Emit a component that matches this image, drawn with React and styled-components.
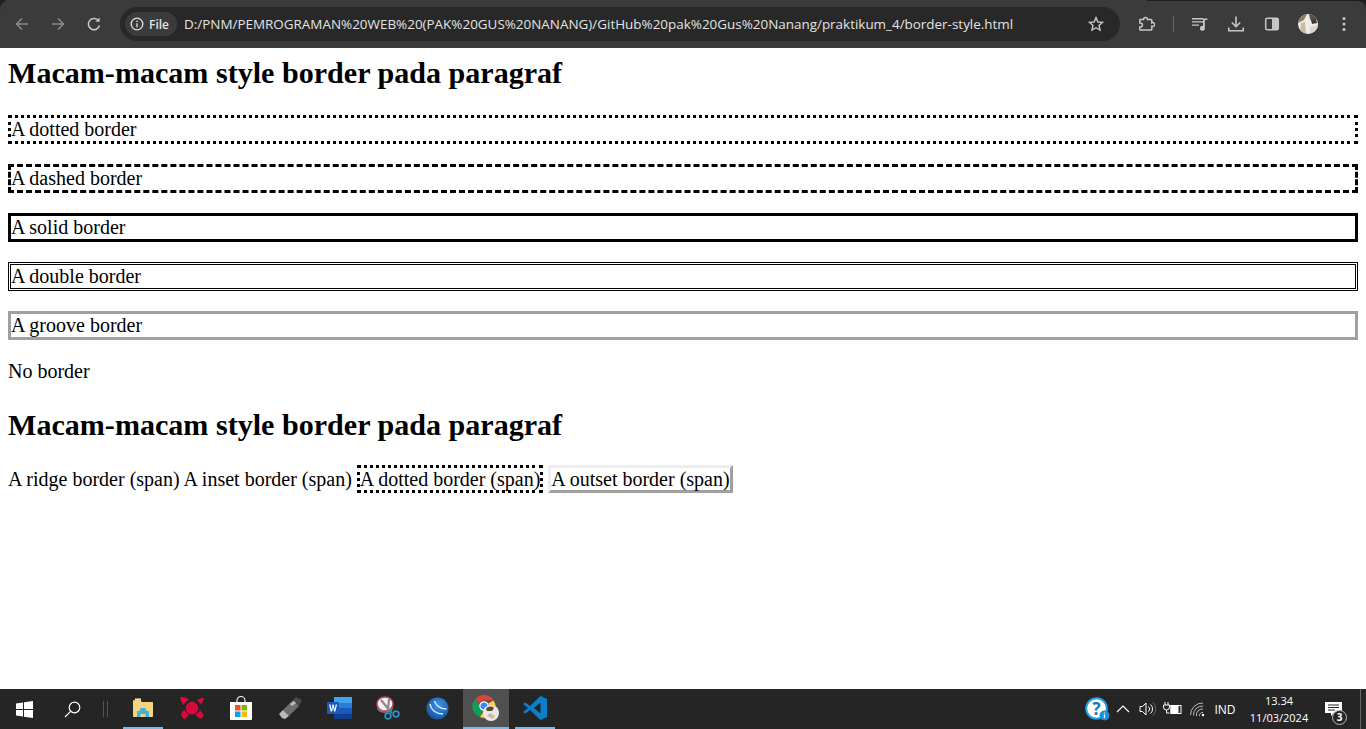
import React from 'react'
import styled, { createGlobalStyle } from 'styled-components'

const GlobalStyle = createGlobalStyle`
    html, body {
        margin: 0;
        padding: 0;
        background: #fff;
    }
`
const Window = styled.div`
    display: flex;
    flex-direction: column;
    height: 729px;
    overflow: hidden;
`
const BrowserBar = styled.header`
    background: #1f1f1f;
`
const TopStrip = styled.div`
    height: 1px;
    background: linear-gradient(to right, #1f1f1f 0, #1f1f1f 5px, #3b3b3b 5px, #3b3b3b 1147px, #1f1f1f 1147px);
`
const Toolbar = styled.div`
    display: flex;
    align-items: center;
    height: 47px;
    background: #3b3b3b;
    padding: 0 0 1px 0;
    box-sizing: border-box;
    border-radius: 8px 8px 0 0;
`
const NavButton = styled.div`
    width: 36px;
    height: 36px;
    display: flex;
    align-items: center;
    justify-content: center;
    color: ${(p) => (p.$off ? '#8a8a8a' : '#c7c7c7')};
`
const NavGroup = styled.div`
    display: flex;
    align-items: center;
    padding-left: 4px;
`
const Omnibox = styled.div`
    display: flex;
    align-items: center;
    width: 1000px;
    height: 34px;
    margin-left: 8px;
    background: #282828;
    border-radius: 17px;
    box-sizing: border-box;
    padding: 0 13px 0 5px;
`
const Chip = styled.div`
    display: flex;
    align-items: center;
    gap: 5px;
    height: 24px;
    padding: 0 8px 0 5px;
    border-radius: 12px;
    background: #3b3b3b;
    color: #e3e3e3;
    font: 600 12px "Open Sans", sans-serif;
`
const Url = styled.div`
    flex: 1;
    margin-left: 7px;
    color: #e3e3e3;
    font: 400 13.45px "Open Sans", sans-serif;
    white-space: nowrap;
    overflow: hidden;
`
const ToolIcons = styled.div`
    display: flex;
    align-items: center;
    margin-left: 8px;
    flex: 1;
`
const ToolIcon = styled.div`
    width: ${(p) => p.$w || 36}px;
    height: 32px;
    display: flex;
    align-items: center;
    justify-content: center;
    color: #c7c7c7;
`
const ToolDivider = styled.div`
    width: 1px;
    height: 16px;
    background: #666;
    margin: 0 8px 0 9px;
`
const Page = styled.main`
    flex: 1;
    padding: 8px;
    background: #fff;
    color: #000;
    font: 20px "Liberation Serif", serif;
    line-height: 23px;
`
const Title = styled.h1`
    font-size: 30.08px;
    line-height: 34px;
    font-weight: 700;
    margin: ${(p) => (p.$first ? '0 0 25px' : '25px 0 26px')};
`
const Para = styled.p`
    margin: 0 0 20px;
    border: ${(p) => p.$border || 'none'};
`
const Line = styled.p`
    margin: 0;
`
const Boxed = styled.span`
    ${(p) => p.$kind === 'dotted' && 'border: 3px dotted #000;'}
    ${(p) => p.$kind === 'outset' && `
        border: 3px solid;
        border-color: #eee #a0a0a0 #a0a0a0 #eee;
    `}
`
const Taskbar = styled.footer`
    display: flex;
    align-items: stretch;
    height: 40px;
    background: #252525;
    color: #fff;
    font: 400 11px "Open Sans", sans-serif;
`
const StartButton = styled.div`
    width: 48px;
    display: flex;
    align-items: center;
    justify-content: center;
`
const SearchButton = styled.div`
    width: 48px;
    display: flex;
    align-items: center;
    justify-content: center;
`
const Grip = styled.div`
    width: 3px;
    height: 16px;
    margin: 12px 15px 0 7px;
    border-left: 1px solid #555;
    border-right: 1px solid #555;
`
const AppSlot = styled.div`
    width: 40px;
    margin-right: 9px;
    display: flex;
    align-items: center;
    justify-content: center;
    box-sizing: border-box;
    border-bottom: 2px solid ${(p) => (p.$open ? '#76b9ed' : 'transparent')};
    ${(p) => p.$active && 'width: 46px; margin: 0 6px 0 -3px; background: #505050;'}
`
const Tray = styled.div`
    margin-left: auto;
    display: flex;
    align-items: center;
`
const TrayIcon = styled.div`
    width: ${(p) => p.$w || 25}px;
    display: flex;
    align-items: center;
    justify-content: center;
`
const Lang = styled.div`
    width: 30px;
    text-align: center;
    font-size: 12px;
`
const Clock = styled.div`
    width: 78px;
    text-align: center;
    line-height: 17px;
`
const Notify = styled.div`
    position: relative;
    align-self: stretch;
    width: 30px;
    display: flex;
    align-items: center;
    justify-content: center;
`
const NotifyBadge = styled.span`
    position: absolute;
    left: 14px;
    top: 21px;
    width: 13px;
    height: 13px;
    border-radius: 50%;
    border: 1px solid #bbb;
    background: #252525;
    font-size: 10px;
    font-weight: 700;
    line-height: 13px;
    text-align: center;
`
const ShowDesktop = styled.div`
    width: 5px;
    border-left: 1px solid #666;
    margin-left: 12px;
    align-self: stretch;
`

const Arrow = ({ flip }) => (
    <svg width="16" height="16" viewBox="0 0 16 16" fill="none" stroke="currentColor" strokeWidth="1.5" transform={flip ? 'scale(-1 1)' : undefined}>
        <path d="M14 8H2.500M8 2.500 2.500 8 8 13.500" />
    </svg>
)
const Reload = () => (
    <svg width="16" height="16" viewBox="0 0 16 16" fill="none" stroke="currentColor" strokeWidth="1.6">
        <path d="M13.400 9.500A5.600 5.600 0 1 1 12 4.200" />
        <path d="M13.600 1.600v4.200H9.400Z" fill="currentColor" stroke="none" />
    </svg>
)
const Info = () => (
    <svg width="14" height="14" viewBox="0 0 14 14" fill="none" stroke="currentColor" strokeWidth="1.3">
        <circle cx="7" cy="7" r="5.800" />
        <path d="M7 6.200v4M7 3.600v1.400" />
    </svg>
)
const Star = () => (
    <svg width="16" height="16" viewBox="0 0 16 16" fill="none" stroke="currentColor" strokeWidth="1.4">
        <path d="M8 1.600 9.900 6l4.700.4-3.600 3.100 1.100 4.600L8 11.700l-4.100 2.400L5 9.500 1.400 6.400 6.100 6Z" />
    </svg>
)
const Puzzle = () => (
    <svg width="18" height="18" viewBox="0 0 18 18" fill="none" stroke="currentColor" strokeWidth="1.5">
        <path d="M3 4.500h3.500a2 2 0 1 1 4 0H14a.8.8 0 0 1 .8.8v2.400a2 2 0 1 1 0 3.600v3a.8.8 0 0 1-.8.8H3.600a.8.8 0 0 1-.8-.8v-2.400h.7a1.900 1.900 0 1 0 0-3.800h-.7V5.300Z" />
    </svg>
)
const MediaQueue = () => (
    <svg width="18" height="18" viewBox="0 0 18 18" fill="currentColor">
        <path d="M1 3h11v1.400H1zM1 6.200h11v1.400H1zM1 9.400h7v1.400H1z" />
        <path d="M12 3.400h4.400v1.600H13.800v8.200a2.400 2.400 0 1 1-1.800-2.200Z" />
    </svg>
)
const Download = () => (
    <svg width="18" height="18" viewBox="0 0 18 18" fill="none" stroke="currentColor" strokeWidth="1.6">
        <path d="M9 1.500v10M4.800 7.500 9 11.700l4.200-4.200M1.800 12.500v3.300h14.400v-3.300" />
    </svg>
)
const SidePanel = () => (
    <svg width="16" height="16" viewBox="0 0 16 16">
        <rect x="1.700" y="2.200" width="12.600" height="11.600" rx="1.500" fill="none" stroke="currentColor" strokeWidth="1.5" />
        <rect x="8" y="2.200" width="6.300" height="11.600" fill="currentColor" />
    </svg>
)
const Dots = () => (
    <svg width="16" height="16" viewBox="0 0 16 16" fill="currentColor">
        <circle cx="8" cy="2.500" r="1.500" />
        <circle cx="8" cy="8" r="1.500" />
        <circle cx="8" cy="13.500" r="1.500" />
    </svg>
)
const AvatarIcon = () => (
    <svg width="20" height="20" viewBox="0 0 20 20">
        <defs>
            <clipPath id="avatar-clip"><circle cx="10" cy="10" r="10" /></clipPath>
        </defs>
        <g clipPath="url(#avatar-clip)">
            <rect width="20" height="20" fill="#efece6" />
            <path d="M0 0h9L6 6 0 9Z" fill="#8c7b66" />
            <path d="M11 0h9v5l-6 3-2-3Z" fill="#5c5044" />
            <path d="M3 9l4-1 1 12H2Z" fill="#cdbb9f" />
            <path d="M13 6l5-1 1 4-5 1Z" fill="#3d3a36" />
            <path d="M12 13l8-2v9h-8Z" fill="#d9d6d0" />
        </g>
    </svg>
)
const WindowsLogo = () => (
    <svg width="17" height="17" viewBox="0 0 17 17" fill="#fff">
        <path d="M0 2.400 7 1.400v6.600H0zM8 1.300 17 0v8H8zM0 9h7v6.600l-7-1zM8 9h9v8l-9-1.300z" />
    </svg>
)
const Search = () => (
    <svg width="17" height="17" viewBox="0 0 17 17" fill="none" stroke="#fff" strokeWidth="1.2">
        <circle cx="10.500" cy="6.500" r="5.300" />
        <path d="M6.600 10.400 1 16" />
    </svg>
)
const Explorer = () => (
    <svg width="22" height="20" viewBox="0 0 22 20">
        <path d="M1 3a1 1 0 0 1 1-1h6l2 2h10.500a.5.5 0 0 1 .5.5V18a1 1 0 0 1-1 1H2a1 1 0 0 1-1-1Z" fill="#f5d67b" />
        <path d="M1 3a1 1 0 0 1 1-1h6l1 1H1Z" fill="#e0a93a" />
        <path d="M3 .5h6v2H3z" fill="#f9eeb5" />
        <path d="M5 19v-6h2.500l1-3h5l1 3H17v6h-3.500v-3h-5v3Z" fill="#3fb3e2" />
    </svg>
)
const RedApp = () => (
    <svg width="26" height="24" viewBox="0 0 26 24" fill="#d8093c">
        <circle cx="13" cy="12" r="6.500" />
        <path d="M1 1c4-.5 7 .5 9 3-2.500 1-4.500 3-5.500 5C3 7 1.500 4 1 1ZM25 2c-2 0-4.500.5-7 2.500 1.500 1 2.800 2.500 3.500 4C23.500 7 24.600 4.500 25 2ZM2 18.500c1-2.200 2-3.600 3.500-4.800 1 2 2.500 3.500 4.500 4.500-1 2-2.500 4-5 5.300-1-1.800-2.300-3.500-3-5ZM24.500 19c-1-2-2-3.500-3.500-5-1 2-2.500 3.500-4.500 4.500 1.500 2 3.500 3.500 6 4.500.8-1.500 1.500-2.800 2-4Z" />
        <path d="M6 12.500a7 7 0 0 1 6-7M20 11.500a7 7 0 0 0-5-5.500" fill="none" stroke="#252525" strokeWidth="0.8" />
    </svg>
)
const StoreBag = () => (
    <svg width="24" height="24" viewBox="0 0 24 24">
        <path d="M8 7V4.500a4 4 0 0 1 8 0V7" fill="none" stroke="#eee" strokeWidth="1.2" />
        <path d="M1 6h22v17a1 1 0 0 1-1 1H2a1 1 0 0 1-1-1Z" fill="#fff" />
        <path d="M6 9h5.500v5.500H6z" fill="#f25022" />
        <path d="M12.500 9H18v5.500h-5.500z" fill="#7fba00" />
        <path d="M6 15.500h5.500V21H6z" fill="#00a4ef" />
        <path d="M12.500 15.500H18V21h-5.500z" fill="#ffb900" />
    </svg>
)
const UsbStick = () => (
    <svg width="24" height="22" viewBox="0 0 24 22">
        <path d="M5 13 15 3l6 6-10 10Z" fill="#6e6e6e" />
        <path d="M15 3l3-3 6 3-3 6Z" fill="#4a4a4a" />
        <path d="M12 7l4-3 2 2-4 3Z" fill="#bdbdbd" />
        <path d="M1 17l4-4 6 6-4 3-3-1Z" fill="#b8b8b8" />
    </svg>
)
const Word = () => (
    <svg width="25" height="22" viewBox="0 0 25 22">
        <path d="M7 0h17a1 1 0 0 1 1 1v20a1 1 0 0 1-1 1H7Z" fill="#2b7cd3" />
        <path d="M7 0h18v6H7z" fill="#41a5ee" />
        <path d="M7 11h18v5.500H7z" fill="#185abd" />
        <path d="M7 16.500h18V22H7z" fill="#103f91" />
        <rect x="0" y="5" width="12" height="12" rx="1" fill="#185abd" />
        <path d="M2 7.500h1.500l1 5 1-5h1.200l1 5 1-5H10l-1.700 7H7l-1-4.500-1 4.500H3.700Z" fill="#fff" />
    </svg>
)
const Scissors = () => (
    <svg width="24" height="25" viewBox="0 0 24 25">
        <ellipse cx="9" cy="12" rx="8" ry="5" fill="#7a7a7a" />
        <ellipse cx="9" cy="8" rx="8" ry="7" fill="#f3f3f3" stroke="#c9475a" strokeWidth="1.5" />
        <path d="M5 4l9 11M13 3l-1 11" stroke="#8a8a8a" strokeWidth="2.2" fill="none" />
        <path d="M13 14l3 3" stroke="#2d8fc5" strokeWidth="1.8" />
        <circle cx="12" cy="20" r="2.800" fill="none" stroke="#2d8fc5" strokeWidth="1.8" />
        <circle cx="20" cy="18" r="2.800" fill="none" stroke="#2d8fc5" strokeWidth="1.8" />
    </svg>
)
const BlueGlobe = () => (
    <svg width="23" height="23" viewBox="0 0 23 23">
        <defs>
            <radialGradient id="globe-fill" cx="55%" cy="35%" r="70%">
                <stop offset="0" stopColor="#3d97e6" />
                <stop offset="1" stopColor="#134f9e" />
            </radialGradient>
        </defs>
        <circle cx="11.500" cy="11.500" r="11" fill="url(#globe-fill)" />
        <path d="M4 7c1 6 6 10 13 10M8.500 4c1 4 5 8 12 8" fill="none" stroke="#e2f0fb" strokeWidth="1.3" />
    </svg>
)
const ChromeIcon = () => (
    <svg width="28" height="28" viewBox="0 0 28 28">
        <path d="M12 1a11 11 0 0 1 9.500 5.500H12a5 5 0 0 0-4.700 3.300L3.500 4.800A11 11 0 0 1 12 1Z" fill="#db4437" />
        <path d="M3.500 4.800 7.300 11a5 5 0 0 0 4 5.900L8 23A11 11 0 0 1 3.500 4.800Z" fill="#0f9d58" />
        <path d="M21.500 6.500A11 11 0 0 1 8 23l4-6a5 5 0 0 0 4.300-7.800Z" fill="#ffcd40" />
        <circle cx="12" cy="12" r="4.200" fill="#4285f4" stroke="#fff" strokeWidth="1.2" />
        <circle cx="19" cy="19" r="8" fill="#ece8e0" />
        <path d="M14 15c2-3 6-3 8-1l-2 3h-5Z" fill="#5a4b3c" />
        <path d="M15 22l3-3 5 3-2 3Z" fill="#c7bba8" />
    </svg>
)
const VsCode = () => (
    <svg width="24" height="24" viewBox="0 0 24 24">
        <path d="M17.500 0 24 3v18l-6.500 3L7 14l-4.500 3.500L0 16l5-4-5-4 2.500-1.500L7 10Zm0 6.500L11 12l6.500 5.500Z" fill="#0a7fcc" />
    </svg>
)
const HelpIcon = () => (
    <svg width="25" height="24" viewBox="0 0 25 24">
        <circle cx="11.500" cy="11.500" r="10.300" fill="#fff" stroke="#22a0e8" strokeWidth="2" />
        <text x="11.500" y="17.500" textAnchor="middle" fontSize="17" fontWeight="700" fontFamily="Open Sans" fill="#1672c0">?</text>
        <circle cx="19.500" cy="18.500" r="5" fill="#1d8fd8" />
        <path d="M19.500 15.500v1M19.500 17.500v3.500" stroke="#fff" strokeWidth="1.3" />
    </svg>
)
const Chevron = () => (
    <svg width="14" height="14" viewBox="0 0 14 14" fill="none" stroke="#fff" strokeWidth="1.1">
        <path d="M1 10 7 4l6 6" />
    </svg>
)
const Speaker = () => (
    <svg width="17" height="16" viewBox="0 0 17 16" fill="none" stroke="#fff" strokeWidth="1">
        <path d="M1 5.500h2.500L7 2v12L3.500 10.500H1Z" />
        <path d="M9.500 5.500a3.500 3.500 0 0 1 0 5M11.500 3.500a6 6 0 0 1 0 9" />
        <path d="M14 1.500a9 9 0 0 1 0 13" stroke="#666" />
    </svg>
)
const Battery = () => (
    <svg width="19" height="14" viewBox="0 0 19 14" fill="none" stroke="#fff" strokeWidth="1">
        <path d="M2 0v3M5 0v3M.5 3h6v2a3 3 0 0 1-6 0ZM3.500 8v3h3" />
        <rect x="8" y="3.500" width="10" height="8" />
        <rect x="8" y="3.500" width="7" height="8" fill="#fff" />
    </svg>
)
const Wifi = () => (
    <svg width="15" height="15" viewBox="0 0 15 15" fill="none" stroke="#bbb" strokeWidth="1">
        <path d="M.5 13A12 12 0 0 1 13 1M3.500 13.500A9 9 0 0 1 13 4M6.500 14A6 6 0 0 1 13 7M9.500 14A3 3 0 0 1 13 10.500" />
        <circle cx="13" cy="13" r="1.200" fill="#fff" stroke="none" />
    </svg>
)
const Bubble = () => (
    <svg width="17" height="15" viewBox="0 0 17 15">
        <path d="M0 0h17v11H9l-3 3v-3H0Z" fill="#fff" />
        <path d="M3 3h11M3 5.500h11M3 8h7" stroke="#252525" strokeWidth="1" />
    </svg>
)

const paragrafs = [
    { text: 'A dotted border', border: '3px dotted #000' },
    { text: 'A dashed border', border: '3px dashed #000' },
    { text: 'A solid border', border: '3px solid #000' },
    { text: 'A double border', border: '3px double #000' },
    { text: 'A groove border', border: '3px solid #a0a0a0' },
    { text: 'No border' },
]

const apps = [
    { key: 'explorer', icon: <Explorer />, open: true },
    { key: 'red', icon: <RedApp /> },
    { key: 'store', icon: <StoreBag /> },
    { key: 'usb', icon: <UsbStick /> },
    { key: 'word', icon: <Word /> },
    { key: 'snip', icon: <Scissors /> },
    { key: 'globe', icon: <BlueGlobe /> },
    { key: 'chrome', icon: <ChromeIcon />, open: true, active: true },
    { key: 'code', icon: <VsCode />, open: true },
]

const App = () => {
    return (
        <Window>
            <GlobalStyle />
            <BrowserBar>
                <TopStrip />
                <Toolbar>
                    <NavGroup>
                        <NavButton $off><Arrow /></NavButton>
                        <NavButton $off><Arrow flip /></NavButton>
                        <NavButton><Reload /></NavButton>
                    </NavGroup>
                    <Omnibox>
                        <Chip><Info />File</Chip>
                        <Url>D:/PNM/PEMROGRAMAN%20WEB%20(PAK%20GUS%20NANANG)/GitHub%20pak%20Gus%20Nanang/praktikum_4/border-style.html</Url>
                        <ToolIcon $w={22}><Star /></ToolIcon>
                    </Omnibox>
                    <ToolIcons>
                        <ToolIcon><Puzzle /></ToolIcon>
                        <ToolDivider />
                        <ToolIcon><MediaQueue /></ToolIcon>
                        <ToolIcon><Download /></ToolIcon>
                        <ToolIcon><SidePanel /></ToolIcon>
                        <ToolIcon><AvatarIcon /></ToolIcon>
                        <ToolIcon><Dots /></ToolIcon>
                    </ToolIcons>
                </Toolbar>
            </BrowserBar>
            <Page>
                <Title $first>Macam-macam style border pada paragraf</Title>
                {paragrafs.map((item) => (
                    <Para key={item.text} $border={item.border}>{item.text}</Para>
                ))}
                <Title>Macam-macam style border pada paragraf</Title>
                <Line>
                    <Boxed>A ridge border (span)</Boxed> <Boxed>A inset border (span)</Boxed> <Boxed $kind="dotted">A dotted border (span)</Boxed> <Boxed $kind="outset">A outset border (span)</Boxed>
                </Line>
            </Page>
            <Taskbar>
                <StartButton><WindowsLogo /></StartButton>
                <SearchButton><Search /></SearchButton>
                <Grip />
                {apps.map((app) => (
                    <AppSlot key={app.key} $open={app.open} $active={app.active}>{app.icon}</AppSlot>
                ))}
                <Tray>
                    <TrayIcon $w={26}><HelpIcon /></TrayIcon>
                    <TrayIcon><Chevron /></TrayIcon>
                    <TrayIcon><Speaker /></TrayIcon>
                    <TrayIcon><Battery /></TrayIcon>
                    <TrayIcon><Wifi /></TrayIcon>
                    <Lang>IND</Lang>
                    <Clock>13.34<br />11/03/2024</Clock>
                    <Notify><Bubble /><NotifyBadge>3</NotifyBadge></Notify>
                    <ShowDesktop />
                </Tray>
            </Taskbar>
        </Window>
    )
}

export default App
